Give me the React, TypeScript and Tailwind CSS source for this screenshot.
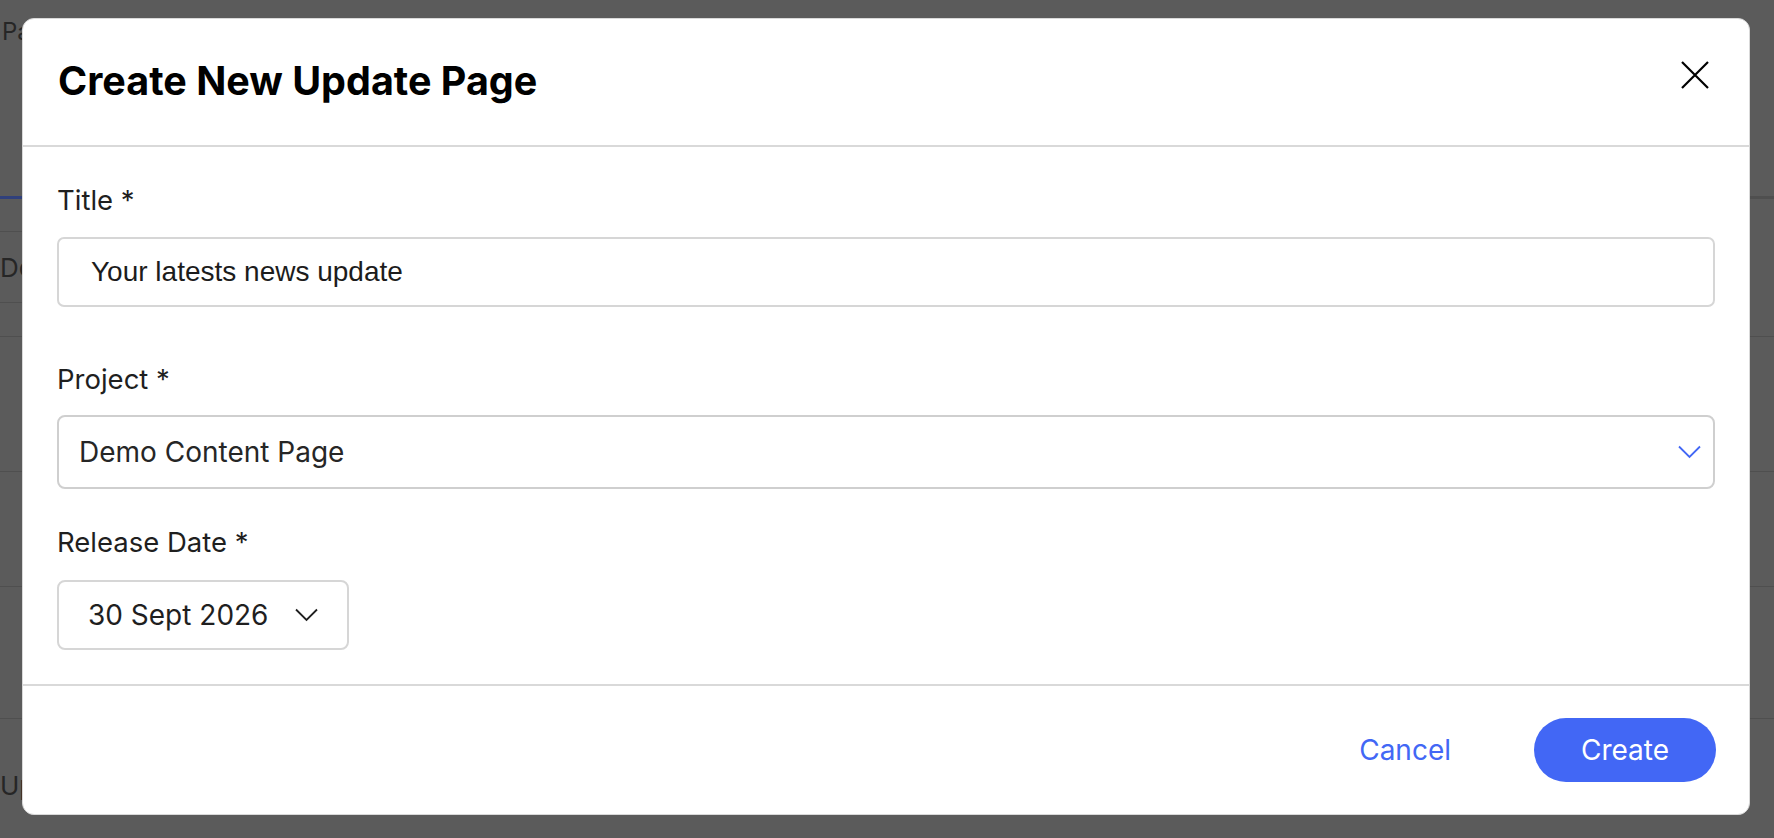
const font = { fontFamily: "Inter, 'Noto Sans', sans-serif" };

function BackgroundPage() {
  return (
    <div className="h-screen w-full overflow-hidden bg-[#5b5b5b] text-[#262626]">
      <div className="h-[196px] pl-[2px] pt-[17px] text-[24px] leading-[30px]">Pages</div>
      <div className="flex h-[3px]">
        <div className="w-[140px] bg-[#30407c]" />
        <div className="flex-1 bg-[#4f4f4f]" />
      </div>
      <div className="h-[32px]" />
      <div className="flex h-[72px] w-[60px] items-center border-y border-[#4f4f4f] text-[26px]">Details</div>
      <div className="h-[33px]" />
      <div className="h-[135px] border-t border-[#4f4f4f]" />
      <div className="h-[115px] border-t border-[#4f4f4f]" />
      <div className="h-[132px] border-t border-[#4f4f4f]" />
      <div className="h-[119px] border-t border-[#4f4f4f] pt-[51px] text-[26px] leading-[32px]">Updates</div>
    </div>
  );
}

function Label({ children }: { children: React.ReactNode }) {
  return <label className="block text-[27.5px] leading-[32px] text-[#1f1f1f]">{children}</label>;
}

function Chevron({ className }: { className: string }) {
  return (
    <svg width="23" height="14" viewBox="0 0 23 14" fill="none" className={className}>
      <path d="M1 1.5l10.5 10.5L22 1.5" stroke="currentColor" strokeWidth="1.8" />
    </svg>
  );
}

export default function App() {
  return (
    <div className="relative" style={font}>
      <BackgroundPage />
      <div className="absolute inset-0 pb-[23px] pl-[22px] pr-[24px] pt-[18px]">
        <div className="flex h-full w-full flex-col rounded-[12px] border border-[#d9d9d9] bg-white">
          <div className="flex h-[128px] items-start justify-between border-b-2 border-[#d9d9d9] pl-[35px] pr-[40px] pt-[39px]">
            <h2 className="text-[39.5px] font-bold leading-[46px] text-black">Create New Update Page</h2>
            <button className="mt-[3px] text-black">
              <svg width="28" height="28" viewBox="0 0 28 28" fill="none">
                <path d="M1 1l26 26M27 1L1 27" stroke="currentColor" strokeWidth="2.2" />
              </svg>
            </button>
          </div>

          <div className="flex-1 px-[34px] pt-[37px]">
            <Label>Title *</Label>
            <input
              className="mt-[21px] block h-[70px] w-full rounded-[7px] border-2 border-[#d6d6d6] pl-[32px] text-[28px] text-[#1c1c1c] outline-none"
              style={{ fontFamily: "'Liberation Sans', Arial, sans-serif" }}
              defaultValue="Your latests news update"
            />

            <div className="mt-[56px]">
              <Label>Project *</Label>
            </div>
            <div className="mt-[20px] flex h-[74px] w-full items-center justify-between rounded-[8px] border-2 border-[#cfcfcf] pl-[20px] pr-[12px]">
              <span className="text-[28px] text-[#262626]">Demo Content Page</span>
              <Chevron className="text-[#4267f5]" />
            </div>

            <div className="mt-[37px]">
              <Label>Release Date *</Label>
            </div>
            <button className="mt-[22px] flex h-[70px] w-[292px] items-center justify-between rounded-[8px] border-2 border-[#d6d6d6] pl-[29px] pr-[29px]">
              <span className="text-[28px] text-[#1f1f1f]">30 Sept 2026</span>
              <Chevron className="text-[#1f1f1f]" />
            </button>
          </div>

          <div className="flex h-[130px] items-center justify-end gap-[83px] border-t-2 border-[#d9d9d9] pr-[33px]">
            <button className="text-[28px] text-[#4267f5]">Cancel</button>
            <button className="h-[64px] w-[182px] rounded-full bg-[#4267f5] text-[28px] text-white">Create</button>
          </div>
        </div>
      </div>
    </div>
  );
}
